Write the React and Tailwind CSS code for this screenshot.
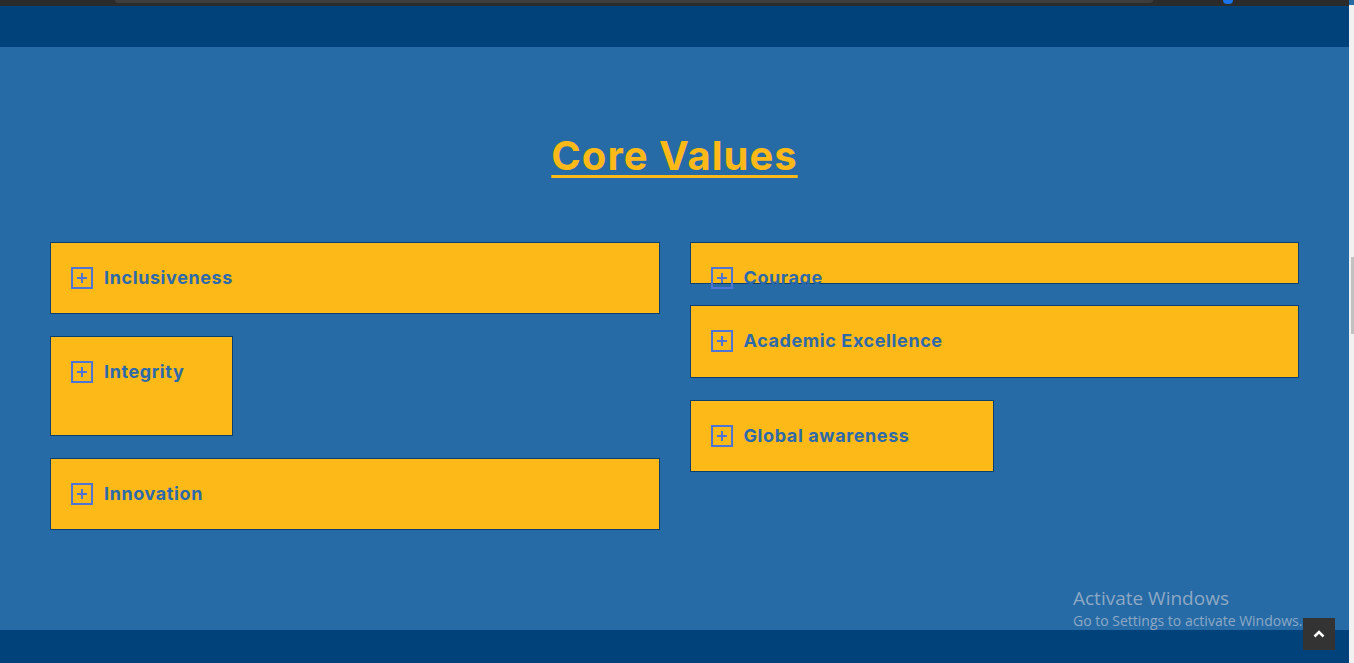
import React from 'react';

const left = [
  { label: 'Inclusiveness', box: 'w-full h-[72px]' },
  { label: 'Integrity', box: 'w-[183px] h-[100px] mt-[22px]' },
  { label: 'Innovation', box: 'w-full h-[72px] mt-[22px]' },
];

const right = [
  { label: 'Courage', box: 'w-full h-[42px]' },
  { label: 'Academic Excellence', box: 'w-full h-[73px] mt-[21px]' },
  { label: 'Global awareness', box: 'w-[304px] h-[72px] mt-[22px]' },
];

function PlusBox() {
  return (
    <span className="flex h-[22px] w-[22px] shrink-0 items-center justify-center border-2 border-[#4f74d8]">
      <svg width="12" height="12" viewBox="0 0 12 12" fill="none" stroke="#4f74d8" strokeWidth="2">
        <path d="M6 1v10M1 6h10" />
      </svg>
    </span>
  );
}

function ValueItem({ label, box }) {
  return (
    <div className={`${box} border border-[#0b3f72] bg-[#fdb918]`}>
      <div className="flex items-center gap-[11px] px-5 pt-6">
        <PlusBox />
        <span className="text-[18px] font-bold leading-[22px] tracking-[0.6px] text-[#2d6aab]">{label}</span>
      </div>
    </div>
  );
}

export default function App() {
  return (
    <div className="flex h-[663px] w-[1354px] overflow-hidden bg-[#266ba6] font-['Inter',sans-serif]">
      <div className="relative flex w-[1349px] flex-col">
        <div className="flex h-[6px] items-start bg-[#2b2b2b]">
          <div className="ml-[115px] h-[3px] w-[1038px] rounded-b-md bg-[#3d3d3d]" />
          <div className="ml-[70px] h-[4px] w-[10px] rounded-b-sm bg-[#1a73e8]" />
        </div>
        <header className="h-[41px] bg-[#01427b]" />
        <section className="flex-1 px-[50px]">
          <h2 className="mt-[83px] text-center text-[40px] font-bold leading-[52px] tracking-[1px] text-[#fdb918]">
            <span className="underline decoration-[3px] underline-offset-[5px]">Core Values</span>
          </h2>
          <div className="mt-[60px] grid grid-cols-2 items-start gap-x-[30px]">
            <div className="flex flex-col items-start">
              {left.map((v) => (
                <ValueItem key={v.label} {...v} />
              ))}
            </div>
            <div className="flex flex-col items-start">
              {right.map((v) => (
                <ValueItem key={v.label} {...v} />
              ))}
            </div>
          </div>
        </section>
        <footer className="h-[33px] bg-[#01427b]" />
        <div className="absolute left-[1073px] top-[586px] font-['Open_Sans',sans-serif] text-[#8da8c4]">
          <div className="text-[19px] leading-[24px]">Activate Windows</div>
          <div className="text-[14px] leading-[22px]">Go to Settings to activate Windows.</div>
        </div>
        <button className="absolute left-[1303px] top-[618px] flex h-[32px] w-[32px] items-center justify-center bg-[#333333]">
          <svg width="12" height="8" viewBox="0 0 12 8" fill="none" stroke="#ffffff" strokeWidth="2.5">
            <path d="M1.5 6.5L6 2l4.5 4.5" />
          </svg>
        </button>
      </div>
      <div className="relative mt-[5px] w-[5px] bg-[#f1f1f1]">
        <div className="absolute left-[2px] top-[252px] h-[77px] w-[3px] bg-[#c1c1c1]" />
      </div>
    </div>
  );
}
